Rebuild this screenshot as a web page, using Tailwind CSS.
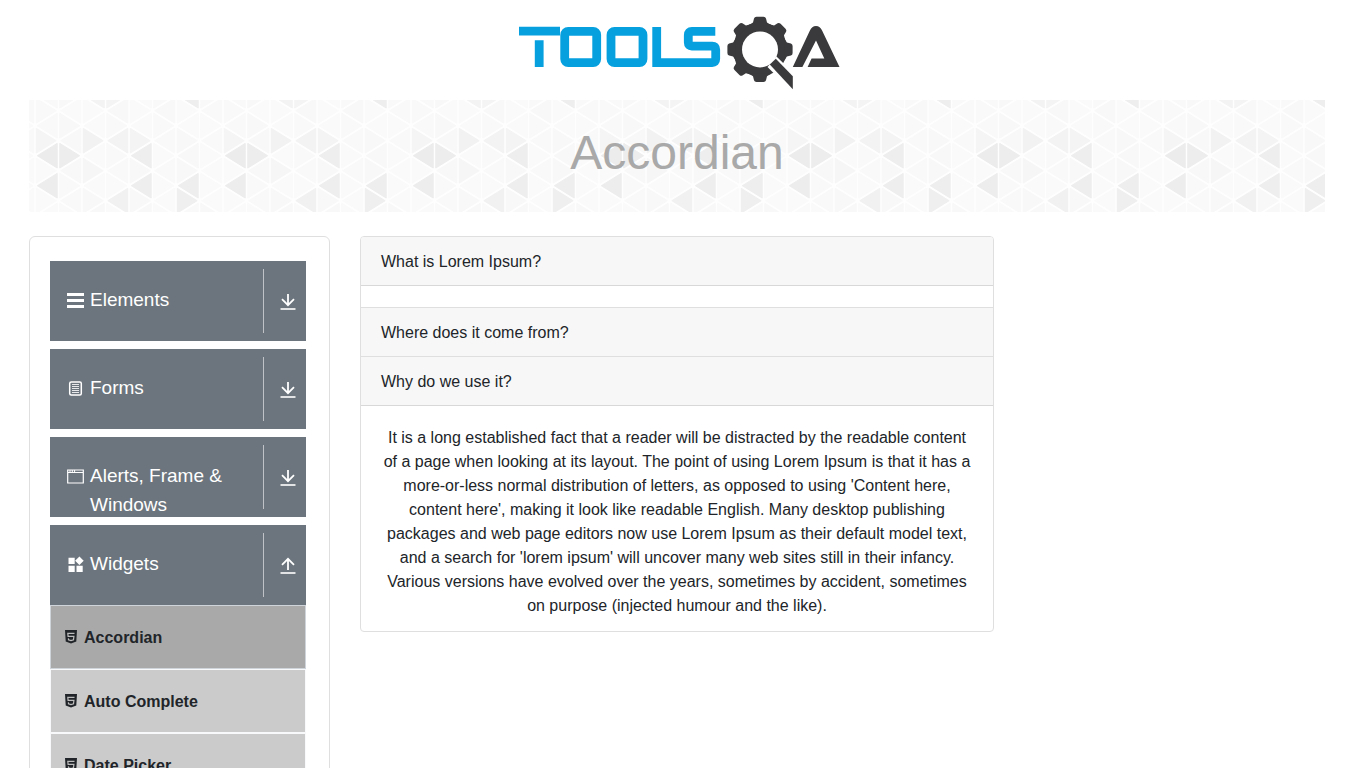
<!DOCTYPE html>
<html lang="en">
<head>
<meta charset="utf-8">
<meta name="viewport" content="width=device-width, initial-scale=1">
<title>ToolsQA - Accordian</title>
<script src="https://cdn.jsdelivr.net/npm/@tailwindcss/browser@4"></script>
</head>
<body class="bg-white font-['Liberation_Sans',Arial,sans-serif] text-base text-[#212529]">
<svg class="hidden" aria-hidden="true">
  <symbol id="down" viewBox="0 0 16 18"><path d="M8 1v11M2 6.200 8 12.200l6-6" fill="none" stroke="#fff" stroke-width="1.800"/><path d="M.500 16h15" stroke="#e1e3e5" stroke-width="2"/></symbol>
  <symbol id="up" viewBox="0 0 16 18"><path d="M8 13V2M2 7.800 8 1.800l6 6" fill="none" stroke="#fff" stroke-width="1.800"/><path d="M.500 16h15" stroke="#e1e3e5" stroke-width="2"/></symbol>
  <symbol id="html5" viewBox="0 0 12 14"><path d="M0 0h12l-.700 11.500L6 13.500.700 11.500z" fill="#212529"/><path d="M9.500 3.300H2.800L3.100 6.300H8.900L8.500 9.700 6 10.500 3.500 9.700 3.400 8.400" fill="none" stroke="#bdbdbd" stroke-width="1.200"/></symbol>
</svg>
<header class="flex justify-center pt-4 pr-[6px]">
  <a href="#" aria-label="TOOLSQA">
    <svg class="block h-[76px] w-[324px]" viewBox="518 16 324 76">
      <g fill="none" stroke="#06a0df" stroke-width="8.800">
        <path d="M519 31.200h41M539.200 40.300V67"/>
        <rect x="564.700" y="31.400" width="32" height="31.200" rx="3.500"/>
        <rect x="611" y="31.400" width="32" height="31.200" rx="3.500"/>
        <path d="M656.700 27v35.600h55.500q3.500 0 3.500-3.500v-9.500q0-3.500-3.500-3.500h-20.400q-3.500 0-3.500-3.500v-7.700q0-3.500 3.500-3.500h23.500"/>
      </g>
      <g fill="#3a3a3c">
        <circle cx="760" cy="49.400" r="27"/>
        <path id="tooth" d="M749 25l4-2.500 1-4q.5-1.700 2.500-1.700h7q2 0 2.500 1.700l1 4 4 2.500z"/>
        <use href="#tooth" transform="rotate(45 760 49.400)"/><use href="#tooth" transform="rotate(90 760 49.400)"/>
        <use href="#tooth" transform="rotate(180 760 49.400)"/><use href="#tooth" transform="rotate(225 760 49.400)"/>
        <use href="#tooth" transform="rotate(270 760 49.400)"/><use href="#tooth" transform="rotate(315 760 49.400)"/>
        <circle cx="760" cy="49.400" r="18" fill="#fff"/>
        <path d="M776.500 56.500l20 19.500v16h-4L767.500 67z" fill="#fff"/>
        <path d="M775.800 58.800l17 17.500V89.300L769.800 64.500z"/>
        <path d="M792.800 67l17-36.300q2-4.700 6.200-4.700t6.200 4.700L839.500 67h-31.900l4-8.400h12.700L816 40.500 802.400 67z"/>
      </g>
    </svg>
  </a>
</header>
<div class="pr-[41px] pl-[29px] pt-2">
  <div class="relative h-28 overflow-hidden">
    <svg class="absolute inset-0 h-full w-full" aria-hidden="true">
      <defs><pattern id="tri" x="6" y="0" width="188" height="112" patternUnits="userSpaceOnUse"></pattern></defs>
      <rect width="100%" height="100%" fill="url(#tri)"/>
    </svg>
    <h1 class="relative pt-6 text-center text-5xl leading-[58px] text-[#a9a9a9]">Accordian</h1>
  </div>
  <div class="mt-6 grid grid-cols-[301fr_634fr_301fr] items-start gap-[30px]">
    <nav class="rounded-md border border-[#dfdfdf] pt-6 pr-[23px] pb-6 pl-5" aria-label="Sections">
      <div class="flex flex-col gap-2">
        <button type="button" class="flex h-20 w-full overflow-hidden bg-[#6c757d] py-2 pr-[10px] text-left text-[19px] leading-[29px] text-white">
          <svg class="mt-6 ml-[17px] h-[16px] w-[17px] shrink-0" viewBox="0 0 17 16"><path d="M0 1.500h17M0 7.500h17M0 13.500h17" stroke="#fff" stroke-width="2.800"/></svg>
          <span class="mt-4 ml-[6px] flex-1">Elements</span>
          <span class="flex h-16 items-center border-l border-[#bfc3c7] pl-4"><svg class="mt-px h-[18px] w-4"><use href="#down"/></svg></span>
        </button>
        <button type="button" class="flex h-20 w-full overflow-hidden bg-[#6c757d] py-2 pr-[10px] text-left text-[19px] leading-[29px] text-white">
          <svg class="mt-6 ml-[17px] h-[16px] w-[17px] shrink-0" viewBox="0 0 17 16"><rect x="2.700" y="1" width="11.600" height="13" rx="1.500" fill="none" stroke="#fff" stroke-width="1.500"/><path d="M5 3.500h7M5 5.500h7M5 7.500h7M5 9.500h7M5 11.500h7" stroke="#e5e7e8" stroke-width="1"/></svg>
          <span class="mt-4 ml-[6px] flex-1">Forms</span>
          <span class="flex h-16 items-center border-l border-[#bfc3c7] pl-4"><svg class="mt-px h-[18px] w-4"><use href="#down"/></svg></span>
        </button>
        <button type="button" class="flex h-20 w-full items-start overflow-hidden bg-[#6c757d] py-2 pr-[10px] text-left text-[19px] leading-[29px] text-white">
          <svg class="mt-6 ml-[17px] h-[16px] w-[17px] shrink-0" viewBox="0 0 17 16"><path d="M.700 1h15.600v13H.700z" fill="none" stroke="#fff" stroke-width="1.200"/><path d="M1 3.500h15M3 1v3M5.300 1v3M7.600 1v3" stroke="#fff" stroke-width="1"/></svg>
          <span class="mt-4 ml-[6px] flex-1">Alerts, Frame &amp; Windows</span>
          <span class="flex h-16 items-center border-l border-[#bfc3c7] pl-4"><svg class="mt-px h-[18px] w-4"><use href="#down"/></svg></span>
        </button>
        <div>
          <button type="button" aria-expanded="true" class="flex h-20 w-full overflow-hidden bg-[#6c757d] py-2 pr-[10px] text-left text-[19px] leading-[29px] text-white">
            <svg class="mt-6 ml-[17px] h-[16px] w-[17px] shrink-0 overflow-visible" viewBox="0 0 17 16" fill="#fff"><path d="M1.500.700h6.200v6.200H1.500zM1.500 8.700h6.200v6.200H1.500zM9.500 8.700h6.200v6.200H9.500zM12.400-.600l4.300 4.300-4.300 4.300-4.300-4.300z"/></svg>
            <span class="mt-4 ml-[6px] flex-1">Widgets</span>
            <span class="flex h-16 items-center border-l border-[#bfc3c7] pl-4"><svg class="mt-px h-[18px] w-4"><use href="#up"/></svg></span>
          </button>
          <ul class="font-bold">
            <li><a href="#" aria-current="page" class="flex h-16 items-center border border-[#ced4da] bg-[#a9a9a9] pt-0.5 pl-[14px]"><svg class="mr-[7px] mb-0.5 h-[14px] w-3"><use href="#html5"/></svg>Accordian</a></li>
            <li><a href="#" class="flex h-16 items-center border border-[#f8f9fa] bg-[#cbcbcb] pt-0.5 pl-[14px]"><svg class="mr-[7px] mb-0.5 h-[14px] w-3"><use href="#html5"/></svg>Auto Complete</a></li>
            <li><a href="#" class="flex h-16 items-center border border-[#f8f9fa] bg-[#cbcbcb] pt-0.5 pl-[14px]"><svg class="mr-[7px] mb-0.5 h-[14px] w-3"><use href="#html5"/></svg>Date Picker</a></li>
          </ul>
        </div>
      </div>
    </nav>
    <main class="overflow-hidden rounded border border-[#dfdfdf]">
      <h2><button type="button" class="block w-full border-b border-[#d8d8d8] bg-[#f7f7f7] px-5 pt-[13px] pb-[11px] text-left leading-6" aria-expanded="false">What is Lorem Ipsum?</button></h2>
      <div class="h-[21px]"></div>
      <h2><button type="button" class="block w-full border-y border-[#dfdfdf] bg-[#f7f7f7] px-5 pt-[13px] pb-[11px] text-left leading-6" aria-expanded="false">Where does it come from?</button></h2>
      <h2><button type="button" class="block w-full border-b border-[#d8d8d8] bg-[#f7f7f7] px-5 pt-[13px] pb-[11px] text-left leading-6" aria-expanded="true">Why do we use it?</button></h2>
      <p class="px-5 pt-5 pb-[13px] text-center leading-6">It is a long established fact that a reader will be distracted by the readable content of a page when looking at its layout. The point of using Lorem Ipsum is that it has a more-or-less normal distribution of letters, as opposed to using 'Content here, content here', making it look like readable English. Many desktop publishing packages and web page editors now use Lorem Ipsum as their default model text, and a search for 'lorem ipsum' will uncover many web sites still in their infancy. Various versions have evolved over the years, sometimes by accident, sometimes on purpose (injected humour and the like).</p>
    </main>
  </div>
</div>
<script>
  // Triangular mosaic: eight columns per tile; "column,side,row" keys pick out the shaded cells.
  const shaded = {
    '0,L,2': '#ececec', '0,L,3': '#ededed', '1,R,2': '#ededed', '2,R,1': '#f2f2f2',
    '3,L,1': '#f3f3f3', '3,L,3': '#f1f1f1', '4,L,2': '#eeeeee', '4,L,3': '#eeeeee',
    '4,R,1': '#f4f4f4', '6,L,3': '#eeeeee', '6,R,3': '#efefef', '6,L,0': '#eeeeee',
    '2,L,0': '#f3f3f3', '3,R,0': '#f4f4f4', '0,R,1': '#f5f5f5', '2,R,2': '#f6f6f6'
  };
  const light = ['#f8f8f8', '#fafafa', '#fafafa', '#f9f9f9', '#f8f8f8', '#fafafa', '#f9f9f9'];
  let out = '<rect width="188" height="112" fill="#fefefe"/>';
  for (let c = 0; c < 8; c++) {
    const x0 = c * 23.5, x1 = x0 + 23.5;
    const left = c % 2 ? 10.700 : -4.300, right = c % 2 ? -4.300 : 10.700;
    for (let r = -1; r < 5; r++) {
      const a = left + r * 30, b = right + r * 30;
      const tri = (side, pts, i) => {
        const f = shaded[c + ',' + side + ',' + r] || light[(c * 5 + (r + 1) * 3 + i) % 7];
        out += `<polygon points="${pts}" fill="${f}" stroke="${f}" stroke-width="1" stroke-linejoin="round"/>`;
      };
      tri('L', `${x0 + 2.4},${a} ${x1 - 1.3},${a - 12.3} ${x1 - 1.3},${a + 12.3}`, 0);
      tri('R', `${x1 - 2.4},${b} ${x0 + 1.3},${b - 12.3} ${x0 + 1.3},${b + 12.3}`, 3);
    }
  }
  document.getElementById('tri').innerHTML = out;
</script>
</body>
</html>
